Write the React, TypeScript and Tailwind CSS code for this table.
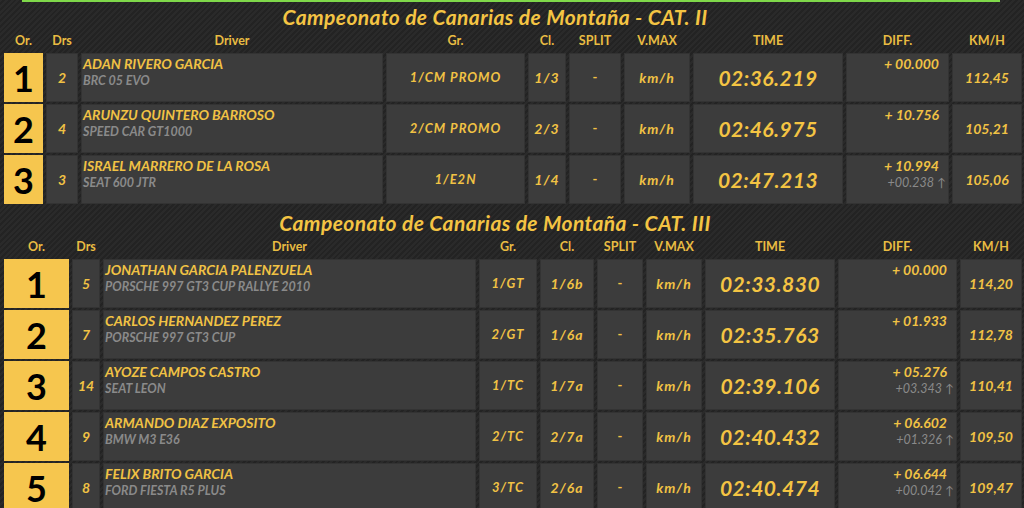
import React from "react";

type Row = {
  pos: number;
  drs: string;
  name: string;
  car: string;
  gr: string;
  cl: string;
  time: string;
  diff: string;
  gap?: string;
  kmh: string;
};

const cat2: Row[] = [
  { pos: 1, drs: "2", name: "ADAN RIVERO GARCIA", car: "BRC 05 EVO", gr: "1/CM PROMO", cl: "1/3", time: "02:36.219", diff: "+ 00.000", kmh: "112,45" },
  { pos: 2, drs: "4", name: "ARUNZU QUINTERO BARROSO", car: "SPEED CAR GT1000", gr: "2/CM PROMO", cl: "2/3", time: "02:46.975", diff: "+ 10.756", kmh: "105,21" },
  { pos: 3, drs: "3", name: "ISRAEL MARRERO DE LA ROSA", car: "SEAT 600 JTR", gr: "1/E2N", cl: "1/4", time: "02:47.213", diff: "+ 10.994", gap: "+00.238", kmh: "105,06" },
];

const cat3: Row[] = [
  { pos: 1, drs: "5", name: "JONATHAN GARCIA PALENZUELA", car: "PORSCHE 997 GT3 CUP RALLYE 2010", gr: "1/GT", cl: "1/6b", time: "02:33.830", diff: "+ 00.000", kmh: "114,20" },
  { pos: 2, drs: "7", name: "CARLOS HERNANDEZ PEREZ", car: "PORSCHE 997 GT3 CUP", gr: "2/GT", cl: "1/6a", time: "02:35.763", diff: "+ 01.933", kmh: "112,78" },
  { pos: 3, drs: "14", name: "AYOZE CAMPOS CASTRO", car: "SEAT LEON", gr: "1/TC", cl: "1/7a", time: "02:39.106", diff: "+ 05.276", gap: "+03.343", kmh: "110,41" },
  { pos: 4, drs: "9", name: "ARMANDO DIAZ EXPOSITO", car: "BMW M3 E36", gr: "2/TC", cl: "2/7a", time: "02:40.432", diff: "+ 06.602", gap: "+01.326", kmh: "109,50" },
  { pos: 5, drs: "8", name: "FELIX BRITO GARCIA", car: "FORD FIESTA R5 PLUS", gr: "3/TC", cl: "2/6a", time: "02:40.474", diff: "+ 06.644", gap: "+00.042", kmh: "109,47" },
];

const heads = ["Or.", "Drs", "Driver", "Gr.", "Cl.", "SPLIT", "V.MAX", "TIME", "DIFF.", "KM/H"];

const cell = "bg-[#3c3c3c] shadow-[inset_0_0_0_1px_#333333] flex items-center justify-center";

function Results({ title, rows, cols }: { title: string; rows: Row[]; cols: string }) {
  return (
    <div className="pl-[4px] pr-[2px]">
      <h2 className="h-[30px] pr-[36px] flex items-center justify-center text-[21px] font-bold italic text-[#f4c443] tracking-[0.4px]">
        {title}
      </h2>
      <div className={`grid ${cols} gap-x-[3px] gap-y-[2px]`}>
        {heads.map((h) => (
          <div key={h} className="h-[19px] flex items-center justify-center text-[12.5px] font-bold text-[#e9bc42]">
            {h}
          </div>
        ))}
        {rows.map((r) => (
          <React.Fragment key={r.pos}>
            <div className="h-[49px] bg-[#f6c64e] flex items-center justify-center text-[36px] font-bold text-black leading-none">
              {r.pos}
            </div>
            <div className={`${cell} text-[14px] font-bold italic text-[#f1c244]`}>{r.drs}</div>
            <div className="bg-[#3c3c3c] shadow-[inset_0_0_0_1px_#333333] pl-[2px] pt-[2px] leading-[17px]">
              <div className="text-[14px] font-bold italic text-[#f1c244]">{r.name}</div>
              <div className="text-[12.5px] font-bold italic text-[#8a8a8a]">{r.car}</div>
            </div>
            <div className={`${cell} text-[13px] font-bold italic text-[#f1c244] tracking-[1px]`}>{r.gr}</div>
            <div className={`${cell} text-[14px] font-bold italic text-[#f1c244] tracking-[1px]`}>{r.cl}</div>
            <div className={`${cell} text-[13px] font-bold text-[#f1c244]`}>-</div>
            <div className={`${cell} text-[14px] font-bold italic text-[#f1c244] tracking-[1px]`}>km/h</div>
            <div className={`${cell} text-[21px] font-bold italic text-[#f4c443] tracking-[0.5px]`}>{r.time}</div>
            <div className="bg-[#3c3c3c] shadow-[inset_0_0_0_1px_#333333] pt-[2px] flex flex-col items-end leading-[17px]">
              <div className="pr-[10px] text-[14px] font-bold italic text-[#f1c244]">{r.diff}</div>
              {r.gap && (
                <div className="pr-[3px] text-[12.5px] italic text-[#8a8a8a] flex items-center gap-[3px]">
                  {r.gap}
                  <span className="not-italic text-[12px]">↑</span>
                </div>
              )}
            </div>
            <div className={`${cell} text-[14px] font-bold italic text-[#f1c244]`}>{r.kmh}</div>
          </React.Fragment>
        ))}
      </div>
    </div>
  );
}

export default function App() {
  return (
    <div
      className="w-[1024px] h-[508px] overflow-hidden bg-[#262626] bg-[repeating-linear-gradient(135deg,#2a2a2a_0px,#2a2a2a_2px,#232323_2px,#232323_4px)]"
      style={{ fontFamily: "Lato, 'Open Sans', sans-serif" }}
    >
      <div className="ml-[22px] w-[978px] h-[2px] bg-[#7fd84a]" />
      <Results
        title="Campeonato de Canarias de Montaña - CAT. II"
        rows={cat2}
        cols="grid-cols-[39px_32px_302px_139px_38px_52px_66px_150px_103px_70px]"
      />
      <div className="h-[4px]" />
      <Results
        title="Campeonato de Canarias de Montaña - CAT. III"
        rows={cat3}
        cols="grid-cols-[65px_28px_373px_58px_54px_46px_56px_130px_119px_62px]"
      />
    </div>
  );
}
